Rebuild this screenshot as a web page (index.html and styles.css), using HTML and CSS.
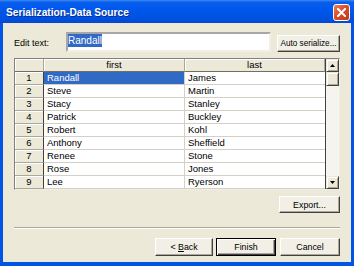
FILE: index.html
```html
<!DOCTYPE html>
<html lang="en">
<head>
    <meta charset="UTF-8">
    <meta name="viewport" content="width=device-width, initial-scale=1.0">
    <title>Serialization-Data Source</title>
    <link rel="stylesheet" href="styles.css">
</head>
<body>
    <div class="window">
        <div class="titlebar">
            <span class="title">Serialization-Data Source</span>
            <button class="close" title="Close">
                <svg width="9" height="9" viewBox="0 0 9 9"><path d="M1 1L8 8M8 1L1 8" stroke="#fff" stroke-width="2" stroke-linecap="square"/></svg>
            </button>
        </div>

        <div class="body">
            <div class="edit-row">
                <label class="edit-label" for="editText">Edit text:</label>
                <div class="edit-box" id="editText"><span class="selected-text">Randall</span></div>
                <button class="btn btn-auto">Auto serialize...</button>
            </div>

            <div class="grid">
                <div class="sheet">
                    <div class="corner"></div>
                    <div class="col-head">first</div>
                    <div class="col-head">last</div>

                    <div class="row-head">1</div><div class="cell first current">Randall</div><div class="cell">James</div>
                    <div class="row-head">2</div><div class="cell first">Steve</div><div class="cell">Martin</div>
                    <div class="row-head">3</div><div class="cell first">Stacy</div><div class="cell">Stanley</div>
                    <div class="row-head">4</div><div class="cell first">Patrick</div><div class="cell">Buckley</div>
                    <div class="row-head">5</div><div class="cell first">Robert</div><div class="cell">Kohl</div>
                    <div class="row-head">6</div><div class="cell first">Anthony</div><div class="cell">Sheffield</div>
                    <div class="row-head">7</div><div class="cell first">Renee</div><div class="cell">Stone</div>
                    <div class="row-head">8</div><div class="cell first">Rose</div><div class="cell">Jones</div>
                    <div class="row-head">9</div><div class="cell first">Lee</div><div class="cell">Ryerson</div>
                </div>
                <div class="vscroll">
                    <div class="sb-btn">
                        <svg width="5" height="3" viewBox="0 0 5 3"><path d="M2.5 0L5 3H0Z" fill="#000"/></svg>
                    </div>
                    <div class="sb-thumb"></div>
                    <div class="sb-track"></div>
                    <div class="sb-btn">
                        <svg width="5" height="3" viewBox="0 0 5 3"><path d="M0 0H5L2.5 3Z" fill="#000"/></svg>
                    </div>
                </div>
            </div>

            <div class="export-row">
                <button class="btn btn-export">Export...</button>
            </div>

            <div class="separator"></div>

            <div class="nav-row">
                <button class="btn btn-back">&lt; <u>B</u>ack</button>
                <button class="btn btn-finish">Finish</button>
                <button class="btn btn-cancel">Cancel</button>
            </div>
        </div>
    </div>
</body>
</html>
```

FILE: styles.css
```css
body {
    margin: 0;
    background-color: #ECE9D8;
    font-family: "Liberation Sans", Arial, sans-serif;
    font-size: 9px;
    color: #000;
}

.window {
    width: 354px;
    height: 266px;
    box-sizing: border-box;
    display: flex;
    flex-direction: column;
    background-color: #0055E5;
    padding: 0 3px 4px 3px; /* frame azul */
}

.titlebar {
    height: 23px;
    margin: 0 -3px;
    padding: 0 4px 0 6px;
    display: flex;
    align-items: center;
    justify-content: space-between;
    background: linear-gradient(#3D8DF5 0, #0A5FEA 2px, #0058EE 8px, #0054E3 16px, #0049D6 23px);
}

.title {
    color: #fff;
    font-weight: bold;
    font-size: 10.2px;
    text-shadow: 1px 1px #0A2C8C;
    margin-top: 1px;
}

.close {
    width: 17px;
    height: 17px;
    padding: 0;
    display: flex;
    align-items: center;
    justify-content: center;
    border: 1px solid #fff;
    border-radius: 3px;
    background: linear-gradient(135deg, #E9805F 0%, #D94F2A 45%, #C33A12 100%);
    margin-top: 2px;
}

.body {
    flex: 1;
    background-color: #ECE9D8;
    padding: 9px 11px 0 11px;
    display: flex;
    flex-direction: column;
}

.edit-row {
    display: flex;
    align-items: flex-end;
    height: 20px;
}

.edit-label {
    width: 52px;
    align-self: center;
    margin-top: 2px;
}

.edit-box {
    width: 205px;
    height: 20px;
    box-sizing: border-box;
    background-color: #fff;
    border: 2px solid;
    border-color: #A7A6AA #F1EFE2 #F1EFE2 #A7A6AA;
    font-size: 10px;
    line-height: 13px;
}

.selected-text {
    display: inline-block;
    background-color: #316AC5;
    color: #fff;
}

.btn {
    font-family: "Liberation Sans", Arial, sans-serif;
    font-size: 8.8px;
    color: #000;
    background-color: #F1EFE6;
    border: 1px solid;
    border-color: #fff #404040 #404040 #fff;
    box-shadow: inset -1px -1px #ACA899;
    padding: 0;
    box-sizing: border-box;
    cursor: pointer;
}

.btn-auto {
    width: 63px;
    height: 17px;
    margin-left: 6px;
    font-size: 8.2px;
}

.grid {
    margin-top: 6px;
    height: 132px;
    box-sizing: border-box;
    display: flex;
    border: 1px solid;
    border-color: #808080 #F1EFE2 #F1EFE2 #808080;
    background-color: #ECE9D8;
}

.sheet {
    display: grid;
    grid-template-columns: 29px 141px 140px;
    grid-auto-rows: 13px;
    font-size: 9.5px;
}

.corner, .col-head, .row-head, .cell {
    box-sizing: border-box;
    line-height: 12px;
}

.corner, .col-head {
    background-color: #ECE9D8;
    border-right: 1px solid #ACA899;
    border-bottom: 1px solid #716F64;
    box-shadow: inset 1px 1px #fff;
    text-align: center;
}

.row-head {
    background-color: #ECE9D8;
    border-right: 1px solid #404040;
    border-bottom: 1px solid #ACA899;
    box-shadow: inset 1px 1px #fff;
    text-align: center;
}

.cell {
    background-color: #fff;
    border-bottom: 1px solid #D4D0C8;
    padding-left: 3px;
    white-space: nowrap;
}

.cell.first {
    border-right: 1px solid #D4D0C8;
}

.cell.current {
    background-color: #316AC5;
    color: #fff;
}

.vscroll {
    width: 14px;
    display: flex;
    flex-direction: column;
    border-left: 1px solid #404040;
}

.sb-btn, .sb-thumb {
    height: 13px;
    box-sizing: border-box;
    background-color: #ECE9D8;
    border: 1px solid;
    border-color: #ECE9D8 #404040 #404040 #ECE9D8;
    box-shadow: inset 1px 1px #fff, inset -1px -1px #ACA899;
    display: flex;
    align-items: center;
    justify-content: center;
}

.sb-thumb {
    height: 14px;
}

.sb-track {
    flex: 1;
    background-color: #F5F4EE;
}

.export-row {
    margin-top: 6px;
    display: flex;
    justify-content: flex-end;
}

.btn-export {
    width: 61px;
    height: 17px;
}

.separator {
    margin-top: 14px;
    height: 1px;
    background-color: #ACA899;
    border-bottom: 1px solid #fff;
}

.nav-row {
    margin-top: 9px;
    display: flex;
    justify-content: flex-end;
}

.btn-back, .btn-finish, .btn-cancel {
    height: 18px;
}

.btn-back {
    width: 58px;
}

.btn-finish {
    width: 60px;
    margin-left: 3px;
    border: 1px solid #000;
    box-shadow: inset 1px 1px #fff, inset -1px -1px #404040, inset -2px -2px #ACA899;
}

.btn-cancel {
    width: 60px;
    margin-left: 4px;
}
```
